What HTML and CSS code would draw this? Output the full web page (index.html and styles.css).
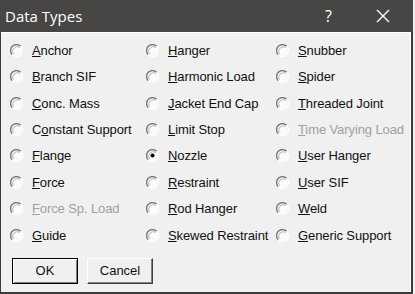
FILE: index.html
```html
<!DOCTYPE html>
<html lang="en">
<head>
    <meta charset="UTF-8">
    <title>Data Types</title>
    <link rel="stylesheet" href="styles.css">
</head>
<body>
<div class="window">
    <div class="titlebar">
        <span class="title">Data Types</span>
        <span class="help">?</span>
        <svg class="close" width="14" height="14" viewBox="0 0 14 14">
            <path d="M1 1 L13 13 M13 1 L1 13" stroke="#fff" stroke-width="1.4" fill="none"/>
        </svg>
    </div>

    <div class="content">
        <div class="options" id="options"></div>

        <div class="buttons">
            <button class="btn default">OK</button>
            <button class="btn">Cancel</button>
        </div>
    </div>
</div>

<script>
    // [label, underlined letter index, disabled, checked] listed column by column
    const columns = [
        [['Anchor', 0], ['Branch SIF', 0], ['Conc. Mass', 0], ['Constant Support', 1], ['Flange', 0], ['Force', 0], ['Force Sp. Load', 0, true], ['Guide', 0]],
        [['Hanger', 0], ['Harmonic Load', 0], ['Jacket End Cap', 0], ['Limit Stop', 0], ['Nozzle', 0, false, true], ['Restraint', 0], ['Rod Hanger', 0], ['Skewed Restraint', 0]],
        [['Snubber', 0], ['Spider', 0], ['Threaded Joint', 0], ['Time Varying Load', 0, true], ['User Hanger', 0], ['User SIF', 0], ['Weld', 0], ['Generic Support', 0]]
    ];

    // old style 3D radio: dark arc top-left, light arc bottom-right
    const radio = (checked) => `
        <svg class="radio" width="13" height="13" viewBox="0 0 13 13">
            <circle cx="6.5" cy="6.5" r="5" fill="#fbfbfb"/>
            <path d="M10.7 2.3 A5.9 5.9 0 0 0 2.3 10.7" stroke="#7a7a7a" stroke-width="1.4" fill="none"/>
            <path d="M9.6 3.4 A4.5 4.5 0 0 0 3.4 9.6" stroke="#b4b4b4" stroke-width="1" fill="none"/>
            <path d="M2.3 10.7 A5.9 5.9 0 0 0 10.7 2.3" stroke="#ffffff" stroke-width="1.3" fill="none"/>
            ${checked ? '<circle cx="6.5" cy="6.5" r="2" fill="#000"/>' : ''}
        </svg>`;

    const options = document.getElementById('options');
    let html = '';
    for (let row = 0; row < 8; row++) {
        for (let col = 0; col < 3; col++) {
            const [label, u, disabled, checked] = columns[col][row];
            const text = label.slice(0, u) + '<u>' + label[u] + '</u>' + label.slice(u + 1);
            html += `<label class="option${disabled ? ' disabled' : ''}">${radio(checked)}<span>${text}</span></label>`;
        }
    }
    options.innerHTML = html;
</script>
</body>
</html>
```

FILE: styles.css
```css
body {
    margin: 0;
    background-color: #f0f0f0;
    font-family: "Liberation Sans", Arial, sans-serif;
}

.window {
    width: 413px;
    height: 294px;
    box-sizing: border-box;
    border-left: 1px solid #3c3b39;
    border-right: 2px solid #3c3b39;
    border-bottom: 2px solid #3c3b39;
    background-color: #f0f0f0;
    display: flex;
    flex-direction: column;
}

.titlebar {
    height: 32px;
    background-color: #474644;
    color: #fff;
    display: flex;
    align-items: center;
    padding: 0 0 0 5px;
    margin-left: -1px;
    margin-right: -2px;
    flex-shrink: 0;
}

.title {
    font-family: "Open Sans", sans-serif;
    font-size: 15px;
    flex: 1;
}

.help {
    font-family: "Open Sans", sans-serif;
    font-size: 16px;
    margin-right: 44px;
}

.close {
    margin-right: 23px;
}

.content {
    flex: 1;
    border-top: 1px solid #fff;
    border-right: 1px solid #fff;
    padding: 4px 0 0 9px;
}

.options {
    display: grid;
    grid-template-columns: 136px 130px 1fr;
    grid-auto-rows: 26.45px;
}

.option {
    display: flex;
    align-items: center;
    font-size: 13px;
    color: #111;
    letter-spacing: -0.1px;
}

.option .radio {
    margin-right: 9px;
    flex-shrink: 0;
}

.option.disabled {
    color: #a0a0a0;
}

.buttons {
    display: flex;
    gap: 9px;
    margin-top: 9px;
    padding-left: 2px;
}

.btn {
    width: 66px;
    height: 26px;
    font-family: "Liberation Sans", Arial, sans-serif;
    font-size: 13px;
    color: #111;
    background-color: #f0f0f0;
    border: 1px solid;
    border-color: #fff #404040 #404040 #fff;
    box-shadow: inset -1px -1px 0 #808080;
    padding: 0;
}

.btn.default {
    border-color: #000;
    box-shadow: inset 1px 1px 0 #fff, inset -1px -1px 0 #808080;
}
```
